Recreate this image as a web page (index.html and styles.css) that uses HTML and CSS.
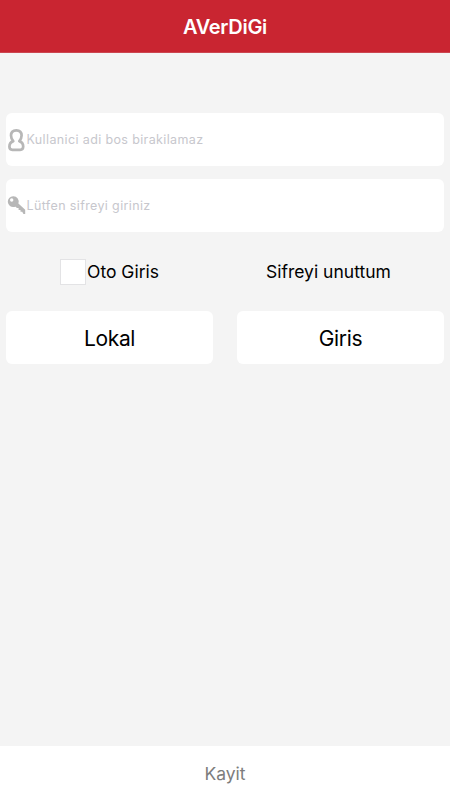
FILE: index.html
```html
<!DOCTYPE html>
<html lang="tr">
<head>
<meta charset="utf-8">
<title>AVerDiGi</title>
<link rel="stylesheet" href="styles.css">
</head>
<body>
<header class="header"><h1 class="title">AVerDiGi</h1></header>
<main class="login">
  <label class="field">
    <svg class="icon" width="20" height="26" viewBox="0 0 20 26" fill="none" stroke="#b7b7b7" stroke-width="2.700" stroke-linejoin="round"><path d="M10.300 3.300C7 3.300 5 5.300 5 8.600c0 2.300.8 4 2.300 5.500C4.600 15 3.400 17 3.400 19.600c0 2 1.200 3.200 3 3.200h7.800c1.800 0 3-1.200 3-3.200 0-2.600-1.200-4.600-3.900-5.500 1.500-1.500 2.300-3.200 2.300-5.500 0-3.300-2-5.300-5.300-5.300z"/></svg>
    <input class="input" type="text" placeholder="Kullanici adi bos birakilamaz">
  </label>
  <label class="field">
    <svg class="icon" width="20" height="26" viewBox="0 0 20 26"><path fill="#b7b7b7" fill-rule="evenodd" d="M7.200 3.200a5.400 5.400 0 1 0 1 10.700l1.500-.1 1.200 1.200h1.700v1.900h1.900v1.900h1.700l1.300 2.200h1.700v-4.300l-6.800-6.200A5.400 5.400 0 0 0 7.200 3.200zM5.700 5.300a1.700 1.700 0 1 1 0 3.400 1.700 1.700 0 0 1 0-3.400z"/></svg>
    <input class="input" type="password" placeholder="Lütfen sifreyi giriniz">
  </label>
  <div class="options">
    <label class="auto"><span class="box"></span><span>Oto Giris</span></label>
    <span class="forgot">Sifreyi unuttum</span>
  </div>
  <div class="actions">
    <button class="button" type="button">Lokal</button>
    <button class="button" type="button">Giris</button>
  </div>
</main>
<footer class="footer">Kayit</footer>
</body>
</html>
```
FILE: styles.css
```css
* { box-sizing: border-box; }
body {
  margin: 0;
  height: 800px;
  display: flex;
  flex-direction: column;
  background: #f4f4f4;
  color: #000;
  font-family: Inter, "Liberation Sans", sans-serif;
}
.header {
  height: 53px;
  padding-top: 2px;
  display: flex;
  align-items: center;
  justify-content: center;
  background: #c92531;
  border-bottom: 1px solid #cb4650;
}
.title { margin: 0; color: #fff; font-size: 20px; font-weight: 600; line-height: 24px; letter-spacing: -0.3px; }
.login { flex: 1; padding: 60px 6px 0; }
.field {
  height: 53px;
  display: flex;
  align-items: center;
  margin-bottom: 13px;
  background: #fff;
  border-radius: 6px;
}
.icon { flex: none; }
.input {
  flex: 1;
  min-width: 0;
  padding: 0 0 1px 0.5px;
  border: 0;
  outline: 0;
  background: transparent;
  font: 12.5px Inter, "Liberation Sans", sans-serif;
  letter-spacing: 0.37px;
}
.input::placeholder { color: #c7c7cd; opacity: 1; }
.options { height: 53px; display: flex; align-items: center; font-size: 17.5px; }
.auto { width: 206px; padding-left: 54px; display: flex; align-items: center; }
.box { width: 26px; height: 26px; margin-right: 1px; background: #fff; border: 1px solid #e3e3e5; }
.forgot { margin-left: 54px; }
.actions { margin-top: 13px; display: grid; grid-template-columns: 1fr 1fr; gap: 24px; }
.button {
  height: 53px;
  padding: 1px 0 0;
  border: 0;
  border-radius: 6px;
  background: #fff;
  color: #000;
  font: 21px Inter, "Liberation Sans", sans-serif;
  letter-spacing: -0.35px;
}
.footer {
  height: 54px;
  display: flex;
  align-items: center;
  justify-content: center;
  background: #fff;
  color: #7d7d7d;
  font-size: 17.5px;
}
```
